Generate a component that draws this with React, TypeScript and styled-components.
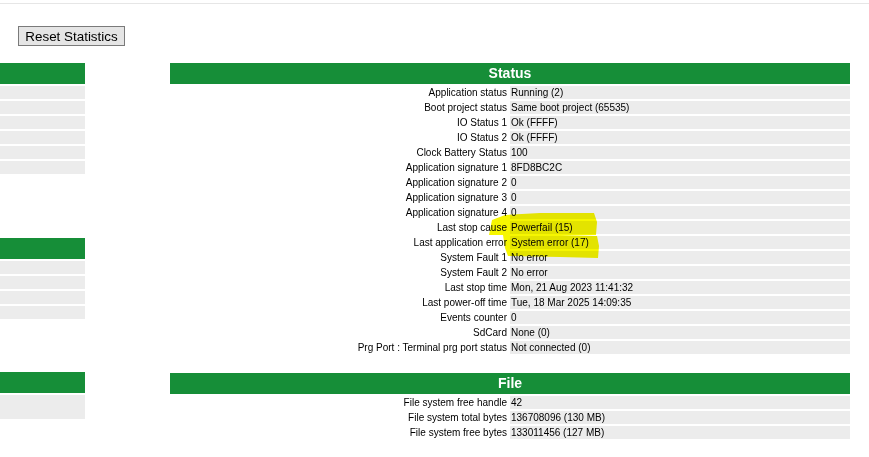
import React from "react";
import styled, { createGlobalStyle } from "styled-components";

const GlobalStyle = createGlobalStyle`
  html, body { margin: 0; padding: 0; background: #ffffff; }
  body { font-family: "Liberation Sans", Arial, sans-serif; color: #000; }
`;

const Page = styled.div`
  position: relative;
  width: 869px;
  height: 457px;
  overflow: hidden;
`;

const TopRule = styled.div`
  margin-top: 3px;
  border-top: 1px solid #e6e6e6;
`;

const Toolbar = styled.div`
  padding-left: 18px;
  margin-top: 22px;
  display: flex;
`;

const Button = styled.button`
  height: 20px;
  width: 107px;
  padding: 0;
  font-family: "Liberation Sans", Arial, sans-serif;
  font-size: 13.4px;
  color: #000;
  background: #e5e5e5;
  border: 1px solid #7a7a7a;
  border-radius: 0;
`;

const Main = styled.div`
  display: flex;
  gap: 85px;
  margin-top: 17px;
`;

const Column = styled.div<{ $width: number }>`
  width: ${(p) => p.$width}px;
  display: flex;
  flex-direction: column;
`;

const Table = styled.div<{ $top?: number }>`
  display: flex;
  flex-direction: column;
  gap: 2px;
  margin-top: ${(p) => p.$top ?? 0}px;
`;

const Header = styled.div`
  height: 21px;
  background: #168e38;
  color: #ffffff;
  font-weight: bold;
  font-size: 14px;
  line-height: 21px;
  text-align: center;
`;

const Row = styled.div`
  display: grid;
  grid-template-columns: 338px 1fr;
  column-gap: 2px;
  height: 13px;
  font-size: 10px;
  line-height: 13px;
`;

const Label = styled.div`
  text-align: right;
  padding-right: 1px;
  white-space: nowrap;
`;

const Value = styled.div`
  background: #ececec;
  padding-left: 1px;
  white-space: nowrap;
`;

const BlankRow = styled.div<{ $h?: number }>`
  height: ${(p) => p.$h ?? 13}px;
  background: #ececec;
`;

const Highlight = styled.svg`
  position: absolute;
  left: 0;
  top: 0;
  pointer-events: none;
  mix-blend-mode: multiply;
`;

const status: [string, string][] = [
  ["Application status", "Running (2)"],
  ["Boot project status", "Same boot project (65535)"],
  ["IO Status 1", "Ok (FFFF)"],
  ["IO Status 2", "Ok (FFFF)"],
  ["Clock Battery Status", "100"],
  ["Application signature 1", "8FD8BC2C"],
  ["Application signature 2", "0"],
  ["Application signature 3", "0"],
  ["Application signature 4", "0"],
  ["Last stop cause", "Powerfail (15)"],
  ["Last application error", "System error (17)"],
  ["System Fault 1", "No error"],
  ["System Fault 2", "No error"],
  ["Last stop time", "Mon, 21 Aug 2023 11:41:32"],
  ["Last power-off time", "Tue, 18 Mar 2025 14:09:35"],
  ["Events counter", "0"],
  ["SdCard", "None (0)"],
  ["Prg Port : Terminal prg port status", "Not connected (0)"],
];

const file: [string, string][] = [
  ["File system free handle", "42"],
  ["File system total bytes", "136708096 (130 MB)"],
  ["File system free bytes", "133011456 (127 MB)"],
];

export default function App() {
  return (
    <>
      <GlobalStyle />
      <Page>
        <TopRule />
        <Toolbar>
          <Button>Reset Statistics</Button>
        </Toolbar>
        <Main>
          <Column $width={85}>
            <Table>
              <Header>&nbsp;</Header>
              {Array.from({ length: 6 }).map((_, i) => (
                <BlankRow key={i} />
              ))}
            </Table>
            <Table $top={64}>
              <Header>&nbsp;</Header>
              {Array.from({ length: 4 }).map((_, i) => (
                <BlankRow key={i} />
              ))}
            </Table>
            <Table $top={53}>
              <Header>&nbsp;</Header>
              <BlankRow $h={24} />
            </Table>
          </Column>
          <Column $width={680}>
            <Table>
              <Header>Status</Header>
              {status.map(([l, v]) => (
                <Row key={l}>
                  <Label>{l}</Label>
                  <Value>{v}</Value>
                </Row>
              ))}
            </Table>
            <Table $top={19}>
              <Header>File</Header>
              {file.map(([l, v]) => (
                <Row key={l}>
                  <Label>{l}</Label>
                  <Value>{v}</Value>
                </Row>
              ))}
            </Table>
          </Column>
        </Main>
        <Highlight width="869" height="457" viewBox="0 0 869 457">
          <polygon
            fill="#f6f600"
            points="492,220 505,215 540,213 594,213 597,222 596,235 540,235 489,235"
          />
          <polygon
            fill="#f6f600"
            points="503,235 560,235 597,236 599,246 598,258 560,257 508,256 505,248"
          />
        </Highlight>
      </Page>
    </>
  );
}
